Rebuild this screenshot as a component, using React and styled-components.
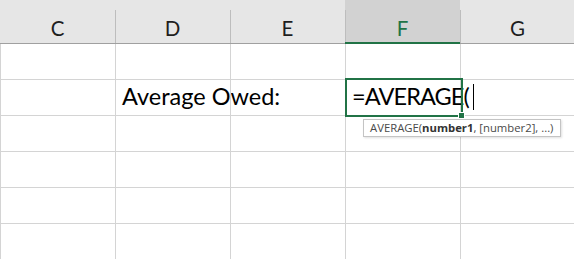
import React from "react";
import styled, { createGlobalStyle, css } from "styled-components";

const Global = createGlobalStyle`
  html, body { margin: 0; padding: 0; background: #ffffff; }
  body { font-family: "Lato", "Liberation Sans", sans-serif; }
`;

const GREEN = "#217346";
const GRID = "#d4d4d4";
const COL_W = 115;

const Sheet = styled.div`
  position: relative;
  width: 574px;
  height: 259px;
  overflow: hidden;
  background: #ffffff;
`;

const HeaderRow = styled.div`
  display: flex;
  height: 44px;
  box-sizing: border-box;
  background: #e6e6e6;
  border-bottom: 1px solid #a0a0a0;
`;

const HeaderCell = styled.div`
  position: relative;
  flex: 0 0 ${COL_W}px;
  width: ${COL_W}px;
  height: 43px;
  box-sizing: border-box;
  display: flex;
  align-items: center;
  justify-content: center;
  padding-top: 13px;
  font-family: "Lato", "Liberation Sans", sans-serif;
  font-size: 20.5px;
  color: #1e1e1e;
  &:not(:first-child)::before {
    content: "";
    position: absolute;
    left: 0;
    top: 10px;
    bottom: 0;
    width: 1px;
    background: #bdbdbd;
  }
  ${(p) =>
    p.$active &&
    css`
      background: #d2d2d2;
      color: ${GREEN};
      height: 44px;
      margin-bottom: -1px;
      border-bottom: 2px solid ${GREEN};
    `}
`;

const Row = styled.div`
  display: flex;
  height: 36px;
`;

const Cell = styled.div`
  position: ${(p) => (p.$selected ? "relative" : "static")};
  flex: 0 0 ${COL_W}px;
  width: ${COL_W}px;
  height: 36px;
  box-sizing: border-box;
  border-left: 1px solid ${GRID};
  border-bottom: 1px solid ${GRID};
  display: flex;
  align-items: flex-end;
  padding: 0 0 5px 6px;
  white-space: nowrap;
  overflow: visible;
  font-family: "Lato", "Liberation Sans", sans-serif;
  font-size: 23.5px;
  color: #000000;
  line-height: 27px;
`;

const CellText = styled.span`
  display: inline-flex;
  align-items: center;
  letter-spacing: ${(p) => (p.$tight ? "-0.9px" : "0")};
`;

const Caret = styled.span`
  display: inline-block;
  width: 1px;
  height: 26px;
  margin-left: 4px;
  background: #000000;
`;

const SelectionBox = styled.div`
  position: absolute;
  left: -1px;
  top: -2px;
  width: 118px;
  height: 39px;
  box-sizing: border-box;
  border: 2px solid ${GREEN};
  z-index: 4;
  pointer-events: none;
`;

const FillHandle = styled.div`
  position: absolute;
  right: -4px;
  bottom: -4px;
  width: 5px;
  height: 5px;
  background: ${GREEN};
  border: 1px solid #ffffff;
`;

const Tooltip = styled.div`
  position: absolute;
  left: 17px;
  top: 39px;
  width: 198px;
  height: 18px;
  box-sizing: border-box;
  padding: 0 0 0 6px;
  display: flex;
  align-items: center;
  background: #ffffff;
  border: 1px solid #c4c4c4;
  box-shadow: 1px 1px 2px rgba(0, 0, 0, 0.12);
  font-family: "Open Sans", "Noto Sans", sans-serif;
  font-size: 11.3px;
  color: #4a4a4a;
  line-height: 16px;
  z-index: 5;
  white-space: nowrap;
`;

const Arg = styled.b`
  font-weight: 700;
  color: #333333;
`;

const columns = ["C", "D", "E", "F", "G"];
const ACTIVE_COL = "F";

export default function App() {
  const rows = [0, 1, 2, 3, 4, 5];
  return (
    <>
      <Global />
      <Sheet>
        <HeaderRow>
          {columns.map((c) => (
            <HeaderCell key={c} $active={c === ACTIVE_COL}>
              {c}
            </HeaderCell>
          ))}
        </HeaderRow>
        {rows.map((r) => (
          <Row key={r}>
            {columns.map((c) => {
              const selected = r === 1 && c === ACTIVE_COL;
              return (
                <Cell key={c} $selected={selected}>
                  {r === 1 && c === "D" && <CellText>Average Owed:</CellText>}
                  {selected && (
                    <>
                      <CellText $tight>
                        =AVERAGE(
                        <Caret />
                      </CellText>
                      <SelectionBox>
                        <FillHandle />
                      </SelectionBox>
                      <Tooltip>
                        AVERAGE(<Arg>number1</Arg>, [number2], ...)
                      </Tooltip>
                    </>
                  )}
                </Cell>
              );
            })}
          </Row>
        ))}
      </Sheet>
    </>
  );
}
